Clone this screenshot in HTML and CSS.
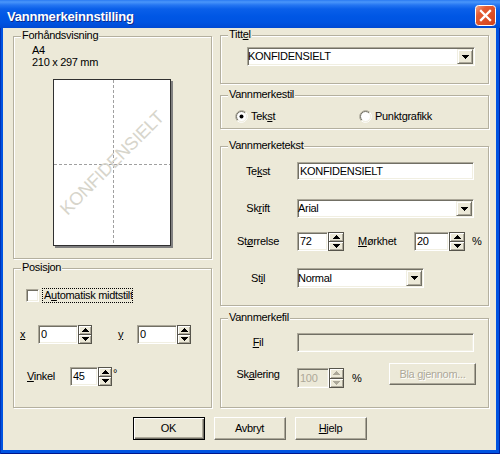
FILE: index.html
```html
<!DOCTYPE html>
<html lang="no">
<head>
<meta charset="utf-8">
<title>Vannmerkeinnstilling</title>
<link rel="stylesheet" href="styles.css">
</head>
<body>
<div class="window">
  <div class="titlebar">
    <span class="title">Vannmerkeinnstilling</span>
    <svg class="close" width="21" height="21" viewBox="0 0 21 21">
      <defs>
        <linearGradient id="cg" x1="0" y1="0" x2="1" y2="1">
          <stop offset="0" stop-color="#f6a88c"/>
          <stop offset="0.3" stop-color="#e45c33"/>
          <stop offset="1" stop-color="#d2401a"/>
        </linearGradient>
      </defs>
      <rect x="0.5" y="0.5" width="20" height="20" rx="3" fill="url(#cg)" stroke="#ffffff"/>
      <path d="M6 6 L15 15 M15 6 L6 15" stroke="#ffffff" stroke-width="2.3" stroke-linecap="square"/>
    </svg>
  </div>
  <div class="client">
    <div class="columns">
      <div class="col col-left">
        <div class="group g-preview">
          <span class="legend">Forhåndsvisning</span>
          <div class="paperinfo">A4<br>210 x 297 mm</div>
          <svg class="paper" width="120" height="169" viewBox="0 0 120 169">
            <rect x="2" y="2" width="118" height="167" fill="#808080"/>
            <rect x="0.5" y="0.5" width="117" height="166" fill="#ffffff" stroke="#303030"/>
            <line x1="60.5" y1="1" x2="60.5" y2="166" stroke="#a0a0a0" stroke-dasharray="3 2"/>
            <line x1="1" y1="85.5" x2="117" y2="85.5" stroke="#a0a0a0" stroke-dasharray="3 2"/>
            <text class="wm" x="59" y="84" transform="rotate(-45 59 84)" text-anchor="middle" dominant-baseline="central">KONFIDENSIELT</text>
          </svg>
        </div>
        <div class="group g-pos">
          <span class="legend">Posisjon</span>
          <div class="row r-check">
            <span class="checkbox sunken"></span>
            <span class="focus">A<u>u</u>tomatisk midtstilt</span>
          </div>
          <div class="row r-xy">
            <span class="lbl lbl-x"><u>x</u></span>
            <span class="field sunken f-x">0</span>
            <span class="spin s14"><span class="sb"><svg class="arr" width="7" height="4" viewBox="0 0 7 4"><path d="M3 0h1v1h1v1h1v1h1v1H0V3h1V2h1V1h1z"/></svg></span><span class="sb"><svg class="arr" width="7" height="4" viewBox="0 0 7 4"><path d="M0 0h7v1H6v1H5v1H4v1H3V3H2V2H1V1H0z"/></svg></span></span>
            <span class="lbl lbl-y"><u>y</u></span>
            <span class="field sunken f-x">0</span>
            <span class="spin s14"><span class="sb"><svg class="arr" width="7" height="4" viewBox="0 0 7 4"><path d="M3 0h1v1h1v1h1v1h1v1H0V3h1V2h1V1h1z"/></svg></span><span class="sb"><svg class="arr" width="7" height="4" viewBox="0 0 7 4"><path d="M0 0h7v1H6v1H5v1H4v1H3V3H2V2H1V1H0z"/></svg></span></span>
          </div>
          <div class="row r-angle">
            <span class="lbl lbl-v"><u>V</u>inkel</span>
            <span class="field sunken f-angle">45</span>
            <span class="spin s14"><span class="sb"><svg class="arr" width="7" height="4" viewBox="0 0 7 4"><path d="M3 0h1v1h1v1h1v1h1v1H0V3h1V2h1V1h1z"/></svg></span><span class="sb"><svg class="arr" width="7" height="4" viewBox="0 0 7 4"><path d="M0 0h7v1H6v1H5v1H4v1H3V3H2V2H1V1H0z"/></svg></span></span>
            <span class="deg">°</span>
          </div>
        </div>
      </div>

      <div class="col col-right">
        <div class="group g-title">
          <span class="legend">Titt<u>e</u>l</span>
          <div class="combo sunken c-title">
            <span class="val">KONFIDENSIELT</span>
            <span class="ddbtn"><svg class="arr" width="7" height="4" viewBox="0 0 7 4"><path d="M0 0h7v1H6v1H5v1H4v1H3V3H2V2H1V1H0z"/></svg></span>
          </div>
        </div>

        <div class="group g-style">
          <span class="legend">Vannmerkestil</span>
          <div class="row r-radio">
            <span class="ropt ropt-1">
              <svg class="radio" width="13" height="13" viewBox="0 0 13 13">
                <path d="M2.26 10.74 A6 6 0 0 1 10.74 2.26" fill="none" stroke="#aca899"/>
                <path d="M10.74 2.26 A6 6 0 0 1 2.26 10.74" fill="none" stroke="#ffffff"/>
                <circle cx="6.5" cy="6.5" r="5" fill="#ffffff"/>
                <path d="M2.96 10.04 A5 5 0 0 1 10.04 2.96" fill="none" stroke="#716f64"/>
                <path d="M10.04 2.96 A5 5 0 0 1 2.96 10.04" fill="none" stroke="#f1efe2"/>
                <circle cx="6.5" cy="6.5" r="2" fill="#000000"/>
              </svg>
              <span class="rlbl">Tek<u>s</u>t</span>
            </span>
            <span class="ropt">
              <svg class="radio" width="13" height="13" viewBox="0 0 13 13">
                <path d="M2.26 10.74 A6 6 0 0 1 10.74 2.26" fill="none" stroke="#aca899"/>
                <path d="M10.74 2.26 A6 6 0 0 1 2.26 10.74" fill="none" stroke="#ffffff"/>
                <circle cx="6.5" cy="6.5" r="5" fill="#ffffff"/>
                <path d="M2.96 10.04 A5 5 0 0 1 10.04 2.96" fill="none" stroke="#716f64"/>
                <path d="M10.04 2.96 A5 5 0 0 1 2.96 10.04" fill="none" stroke="#f1efe2"/>
              </svg>
              <span class="rlbl">Punkt<u>g</u>rafikk</span>
            </span>
          </div>
        </div>

        <div class="group g-text">
          <span class="legend">Vannmerketekst</span>
          <div class="frow fr-1">
            <span class="flbl">Te<u>k</u>st</span>
            <span class="field sunken f-wide h18">KONFIDENSIELT</span>
          </div>
          <div class="frow fr-2">
            <span class="flbl">Sk<u>r</u>ift</span>
            <div class="combo sunken c-wide">
              <span class="val">Arial</span>
              <span class="ddbtn"><svg class="arr" width="7" height="4" viewBox="0 0 7 4"><path d="M0 0h7v1H6v1H5v1H4v1H3V3H2V2H1V1H0z"/></svg></span>
            </div>
          </div>
          <div class="frow fr-3">
            <span class="flbl">St<u>ø</u>rrelse</span>
            <span class="field sunken f-size">72</span>
            <span class="spin s16"><span class="sb"><svg class="arr" width="7" height="4" viewBox="0 0 7 4"><path d="M3 0h1v1h1v1h1v1h1v1H0V3h1V2h1V1h1z"/></svg></span><span class="sb"><svg class="arr" width="7" height="4" viewBox="0 0 7 4"><path d="M0 0h7v1H6v1H5v1H4v1H3V3H2V2H1V1H0z"/></svg></span></span>
            <span class="lbl lbl-dark"><u>M</u>ørkhet</span>
            <span class="field sunken f-dark">20</span>
            <span class="spin s16"><span class="sb"><svg class="arr" width="7" height="4" viewBox="0 0 7 4"><path d="M3 0h1v1h1v1h1v1h1v1H0V3h1V2h1V1h1z"/></svg></span><span class="sb"><svg class="arr" width="7" height="4" viewBox="0 0 7 4"><path d="M0 0h7v1H6v1H5v1H4v1H3V3H2V2H1V1H0z"/></svg></span></span>
            <span class="pct pct-dark">%</span>
          </div>
          <div class="frow fr-4">
            <span class="flbl">St<u>i</u>l</span>
            <div class="combo sunken c-style">
              <span class="val">Normal</span>
              <span class="ddbtn"><svg class="arr" width="7" height="4" viewBox="0 0 7 4"><path d="M0 0h7v1H6v1H5v1H4v1H3V3H2V2H1V1H0z"/></svg></span>
            </div>
          </div>
        </div>

        <div class="group g-file">
          <span class="legend">Vannmerkefil</span>
          <div class="frow ff-1">
            <span class="flbl"><u>F</u>il</span>
            <span class="field sunken f-wide h19 disabled"></span>
          </div>
          <div class="frow ff-2">
            <span class="flbl tall">Sk<u>a</u>lering</span>
            <span class="field sunken f-scale disabled">100</span>
            <span class="spin s15 dis"><span class="sb"><svg class="arr" width="7" height="4" viewBox="0 0 7 4"><path d="M3 0h1v1h1v1h1v1h1v1H0V3h1V2h1V1h1z"/></svg></span><span class="sb"><svg class="arr" width="7" height="4" viewBox="0 0 7 4"><path d="M0 0h7v1H6v1H5v1H4v1H3V3H2V2H1V1H0z"/></svg></span></span>
            <span class="pct pct-scale">%</span>
            <span class="btn btn-browse">Bla gjennom...</span>
          </div>
        </div>
      </div>
    </div>

    <div class="buttons">
      <span class="btn btn-default">OK</span>
      <span class="btn">Avbryt</span>
      <span class="btn"><u>H</u>jelp</span>
    </div>
  </div>
</div>
</body>
</html>
```

FILE: styles.css
```css
* { box-sizing: border-box; }
html, body { margin: 0; padding: 0; }
body {
  width: 500px;
  height: 454px;
  overflow: hidden;
  background: #0054e3;
}

.window {
  width: 500px;
  height: 454px;
  display: flex;
  flex-direction: column;
  background: #0053e1;
  box-shadow: inset 1px 0 0 #0033b8, inset -1px 0 0 #0022a0, inset 0 -1px 0 #00168c;
}

.titlebar {
  height: 28px;
  flex: none;
  display: flex;
  justify-content: space-between;
  align-items: flex-start;
  padding: 0 4px 0 7px;
  background: linear-gradient(to bottom,
    #2a7af2 0px, #4a96fa 2px, #2576f2 5px, #0a5fe9 9px,
    #0057e5 16px, #0054e2 22px, #004cd6 27px, #0049d2 28px);
}
.title {
  margin-top: 9px;
  font: bold 13px/15px "Liberation Sans", Arial, sans-serif;
  letter-spacing: -0.2px;
  color: #ffffff;
  text-shadow: 1px 1px 0 #0d2a8f;
}
.close { margin-top: 5px; display: block; flex: none; }

.client {
  flex: 1;
  margin: 0 4px 4px 3px;
  background: #ece9d8;
  padding: 7px 7px 0 10px;
  font: 11px/13px "Liberation Sans", Arial, sans-serif;
  letter-spacing: -0.3px;
  color: #000;
  display: flex;
  flex-direction: column;
}

.columns { display: flex; gap: 8px; }
.col { display: flex; flex-direction: column; }
.col-left { width: 199px; }
.col-right { width: 269px; }

.group {
  position: relative;
  flex: none;
  border: 1px solid #b4b09f;
  box-shadow: inset 1px 1px 0 #fff, 1px 1px 0 #fff;
}
.legend {
  position: absolute;
  top: -8px;
  left: 7px;
  padding: 0 1px;
  background: #ece9d8;
  line-height: 13px;
  white-space: nowrap;
}

/* preview */
.g-preview { margin-top: 1px; height: 223px; padding: 7px 0 0 18px; }
.paperinfo { line-height: 12px; }
.paper { display: block; margin: 11px 0 0 21px; }
.wm {
  font-family: "Liberation Sans", Arial, sans-serif;
  font-size: 18px;
  fill: #d7d5cb;
}

/* position */
.g-pos { margin-top: 9px; height: 140px; padding-top: 19px; }
.row { display: flex; align-items: center; }
.r-check { height: 15px; padding-left: 12px; }
.checkbox { width: 13px; height: 13px; background: #fff; flex: none; }
.focus {
  margin-left: 3px;
  width: 91px;
  height: 15px;
  border: 1px dotted #000;
  padding: 0 1px;
  overflow: hidden;
  white-space: nowrap;
  line-height: 13px;
  flex: none;
}
.r-xy { margin-top: 22px; height: 19px; }
.r-angle { margin-top: 23px; height: 19px; }
.lbl { flex: none; white-space: nowrap; }
.lbl-x { margin-left: 6px; width: 18px; }
.lbl-y { margin-left: 26px; width: 19px; }
.lbl-v { margin-left: 13px; width: 43px; }
.deg { align-self: flex-start; margin-left: 1px; line-height: 12px; }

/* generic controls */
.sunken {
  border: 1px solid;
  border-color: #aca899 #fff #fff #aca899;
  box-shadow: inset 1px 1px 0 #716f64, inset -1px -1px 0 #f1efe2;
}
.field {
  flex: none;
  background: #fff;
  display: flex;
  align-items: center;
  padding-left: 2px;
  height: 19px;
  white-space: nowrap;
  overflow: hidden;
}
.field.disabled { background: #ece9d8; color: #aca899; }
.f-x { width: 40px; }
.f-angle { width: 28px; }
.f-wide { width: 177px; }
.h18 { height: 18px; }
.h19 { height: 19px; }
.f-size { width: 31px; }
.f-dark { width: 35px; }
.f-scale { width: 32px; height: 20px; margin-top: 5px; }

.spin {
  flex: none;
  display: flex;
  flex-direction: column;
  height: 19px;
  border: 1px solid #57554c;
  background: #ece9d8;
}
.s14 { width: 14px; }
.s16 { width: 16px; }
.s15 { width: 15px; height: 20px; margin-top: 5px; }
.sb {
  flex: 1;
  display: flex;
  align-items: center;
  justify-content: center;
  box-shadow: inset 1px 1px 0 #fff, inset -1px -1px 0 #aca899;
}
.sb + .sb { border-top: 1px solid #57554c; }
.arr { display: block; fill: #000; }
.dis .arr { fill: #aca899; }

.combo {
  flex: none;
  display: flex;
  background: #fff;
  padding: 1px 1px 1px 0;
}
.combo .val {
  flex: 1;
  display: flex;
  align-items: center;
  white-space: nowrap;
}
.ddbtn {
  flex: none;
  width: 16px;
  display: flex;
  align-items: center;
  justify-content: center;
  background: #ece9d8;
  border: 1px solid;
  border-color: #f1efe2 #716f64 #716f64 #f1efe2;
  box-shadow: inset 1px 1px 0 #fff, inset -1px -1px 0 #aca899;
}
.c-title { width: 228px; height: 19px; }
.c-wide { width: 177px; height: 19px; }
.c-style { width: 127px; height: 20px; }

/* right groups */
.g-title { height: 49px; padding: 11px 0 0 26px; }
.g-style { margin-top: 11px; height: 34px; padding: 14px 0 0 14px; }
.g-text { margin-top: 17px; height: 160px; padding-top: 15px; }
.g-file { margin-top: 12px; height: 90px; padding-top: 14px; }

.r-radio { height: 13px; }
.ropt { display: flex; align-items: center; flex: none; }
.ropt-1 { width: 124px; }
.radio { display: block; flex: none; }
.rlbl { margin-left: 3px; white-space: nowrap; }

.frow { display: flex; align-items: center; }
.flbl {
  flex: none;
  margin: 0 10px 0 8px;
  width: 58px;
  text-align: center;
  white-space: nowrap;
}
.fr-1 { height: 18px; }
.fr-2 { margin-top: 19px; height: 19px; }
.fr-3 { margin-top: 14px; height: 19px; }
.fr-4 { margin-top: 17px; height: 20px; }
.lbl-dark { margin-left: 14px; width: 56px; }
.pct { flex: none; }
.pct-dark { margin-left: 7px; }

.ff-1 { height: 19px; }
.ff-2 { margin-top: 11px; height: 25px; align-items: flex-start; padding-right: 12px; }
.flbl.tall { height: 22px; line-height: 22px; }
.pct-scale { margin-left: 8px; margin-top: 5px; line-height: 20px; }

/* buttons */
.btn {
  flex: none;
  width: 72px;
  height: 23px;
  display: flex;
  align-items: center;
  justify-content: center;
  background: #ece9d8;
  border: 1px solid;
  border-color: #fff #716f64 #716f64 #fff;
  box-shadow: inset -1px -1px 0 #aca899;
  white-space: nowrap;
}
.btn-default {
  border-color: #000;
  box-shadow: inset 1px 1px 0 #fff, inset -1px -1px 0 #716f64, inset -2px -2px 0 #aca899;
}
.btn-browse {
  margin-left: auto;
  width: 87px;
  height: 22px;
  color: #aca899;
  text-shadow: 1px 1px 0 #fff;
}
.buttons {
  margin-top: 9px;
  display: flex;
  justify-content: center;
  gap: 9px;
  padding-right: 3px;
}
```
